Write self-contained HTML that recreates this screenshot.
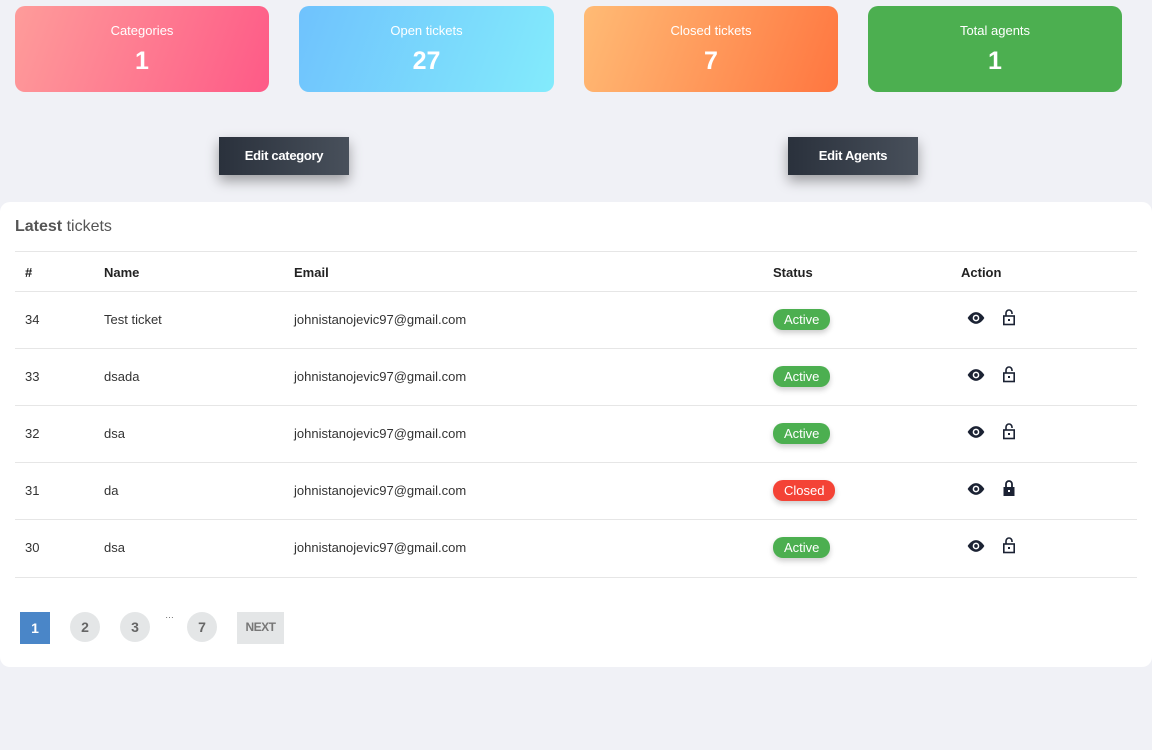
<!DOCTYPE html><html><head><style>
body{margin:0;background:#f0f1f6;font-family:"Liberation Sans",sans-serif;width:1152px;height:750px;position:relative;overflow:hidden}
.card{position:absolute;top:6px;width:254px;height:86px;border-radius:10px;color:#fff;text-align:center}
.card .t{margin-top:17px;font-size:13px}
.card .n{font-size:25px;font-weight:bold;margin-top:9px}
.btn{position:absolute;top:137px;height:38px;width:130px;background:linear-gradient(90deg,#2a313c,#48505b);color:#fff;font-weight:bold;font-size:13px;line-height:38px;text-align:center;box-shadow:0 6px 12px rgba(0,0,0,.35);letter-spacing:-.3px}
.panel{position:absolute;left:0;top:202px;width:1152px;height:465px;background:#fff;border-radius:10px}
.h{position:absolute;left:15px;top:16px;font-size:16px;color:#555}
.row{position:absolute;left:15px;width:1122px;border-top:1px solid #e6e6e6;font-size:13px;color:#333}
.row span{position:absolute}
.badge{color:#fff;border-radius:10px;padding:3px 11px;font-size:13px;box-shadow:0 3px 6px rgba(0,0,0,.2)}
.pg{position:absolute;top:410px;width:30px;height:30px;border-radius:50%;background:#e4e6e7;color:#666;font-weight:bold;font-size:14px;text-align:center;line-height:30px}
</style></head><body>
<svg width="0" height="0" style="position:absolute"><defs>
<symbol id="eye" viewBox="0 0 24 16"><path d="M12 1C6 1 2 8 2 8s4 7 10 7 10-7 10-7-4-7-10-7z" fill="#1b2233"/><circle cx="12" cy="8" r="4" fill="#fff"/><circle cx="12" cy="8" r="2.2" fill="#1b2233"/></symbol>
<symbol id="lo" viewBox="0 0 14 18"><path d="M4 8V5a3 3 0 0 1 6 0v1" fill="none" stroke="#1b2233" stroke-width="1.6"/><rect x="1.8" y="8" width="10.4" height="8.5" fill="none" stroke="#1b2233" stroke-width="1.6"/><rect x="6" y="11" width="2" height="2" fill="#1b2233"/></symbol>
<symbol id="lc" viewBox="0 0 14 18"><path d="M4 8V5a3 3 0 0 1 6 0v3" fill="none" stroke="#1b2233" stroke-width="1.8"/><rect x="1.5" y="8" width="11" height="9" fill="#1b2233"/><rect x="6" y="11" width="2" height="2" fill="#fff"/></symbol>
</defs></svg>
<div class="card" style="left:15px;background:linear-gradient(110deg,#fe9c9a,#fe5a87)"><div class="t">Categories</div><div class="n">1</div></div>
<div class="card" style="left:299px;width:255px;background:linear-gradient(110deg,#6fc2fd,#83ebfc)"><div class="t">Open tickets</div><div class="n">27</div></div>
<div class="card" style="left:584px;background:linear-gradient(110deg,#ffbb75,#ff7640)"><div class="t">Closed tickets</div><div class="n">7</div></div>
<div class="card" style="left:868px;background:#4caf50"><div class="t">Total agents</div><div class="n">1</div></div>
<div class="btn" style="left:219px">Edit category</div>
<div class="btn" style="left:788px">Edit Agents</div>
<div class="panel">
<div class="h"><b style="font-weight:600">Latest</b> tickets</div>
<div class="row" style="top:49px;height:40px;font-weight:bold;color:#222"><span style="left:10px;top:13px">#</span><span style="left:89px;top:13px">Name</span><span style="left:279px;top:13px">Email</span><span style="left:758px;top:13px">Status</span><span style="left:946px;top:13px">Action</span></div>
<div class="row" style="top:89px;height:57px"><span style="left:10px;top:20px">34</span><span style="left:89px;top:20px">Test ticket</span><span style="left:279px;top:20px">johnistanojevic97@gmail.com</span><span class="badge" style="left:758px;top:17px;background:#4caf50">Active</span><svg style="position:absolute;left:951px;top:19px" width="20" height="14"><use href="#eye"/></svg><svg style="position:absolute;left:987px;top:16px" width="14" height="18"><use href="#lo"/></svg></div>
<div class="row" style="top:146px;height:57px"><span style="left:10px;top:20px">33</span><span style="left:89px;top:20px">dsada</span><span style="left:279px;top:20px">johnistanojevic97@gmail.com</span><span class="badge" style="left:758px;top:17px;background:#4caf50">Active</span><svg style="position:absolute;left:951px;top:19px" width="20" height="14"><use href="#eye"/></svg><svg style="position:absolute;left:987px;top:16px" width="14" height="18"><use href="#lo"/></svg></div>
<div class="row" style="top:203px;height:57px"><span style="left:10px;top:20px">32</span><span style="left:89px;top:20px">dsa</span><span style="left:279px;top:20px">johnistanojevic97@gmail.com</span><span class="badge" style="left:758px;top:17px;background:#4caf50">Active</span><svg style="position:absolute;left:951px;top:19px" width="20" height="14"><use href="#eye"/></svg><svg style="position:absolute;left:987px;top:16px" width="14" height="18"><use href="#lo"/></svg></div>
<div class="row" style="top:260px;height:57px"><span style="left:10px;top:20px">31</span><span style="left:89px;top:20px">da</span><span style="left:279px;top:20px">johnistanojevic97@gmail.com</span><span class="badge" style="left:758px;top:17px;background:#f44336">Closed</span><svg style="position:absolute;left:951px;top:19px" width="20" height="14"><use href="#eye"/></svg><svg style="position:absolute;left:987px;top:16px" width="14" height="18"><use href="#lc"/></svg></div>
<div class="row" style="top:317px;height:57px;border-bottom:1px solid #e6e6e6"><span style="left:10px;top:20px">30</span><span style="left:89px;top:20px">dsa</span><span style="left:279px;top:20px">johnistanojevic97@gmail.com</span><span class="badge" style="left:758px;top:17px;background:#4caf50">Active</span><svg style="position:absolute;left:951px;top:19px" width="20" height="14"><use href="#eye"/></svg><svg style="position:absolute;left:987px;top:16px" width="14" height="18"><use href="#lo"/></svg></div>
<div style="position:absolute;left:20px;top:410px;width:30px;height:32px;background:#4a86c8;color:#fff;font-weight:bold;font-size:14px;text-align:center;line-height:32px">1</div>
<div class="pg" style="left:70px">2</div><div class="pg" style="left:120px">3</div>
<div style="position:absolute;left:165px;top:408px;font-size:9px;color:#666">…</div>
<div class="pg" style="left:187px">7</div>
<div style="position:absolute;left:237px;top:410px;width:47px;height:32px;background:#e4e6e7;color:#777;font-weight:bold;font-size:12px;text-align:center;line-height:30px;letter-spacing:-.5px">NEXT</div>
</div>
</body></html>
